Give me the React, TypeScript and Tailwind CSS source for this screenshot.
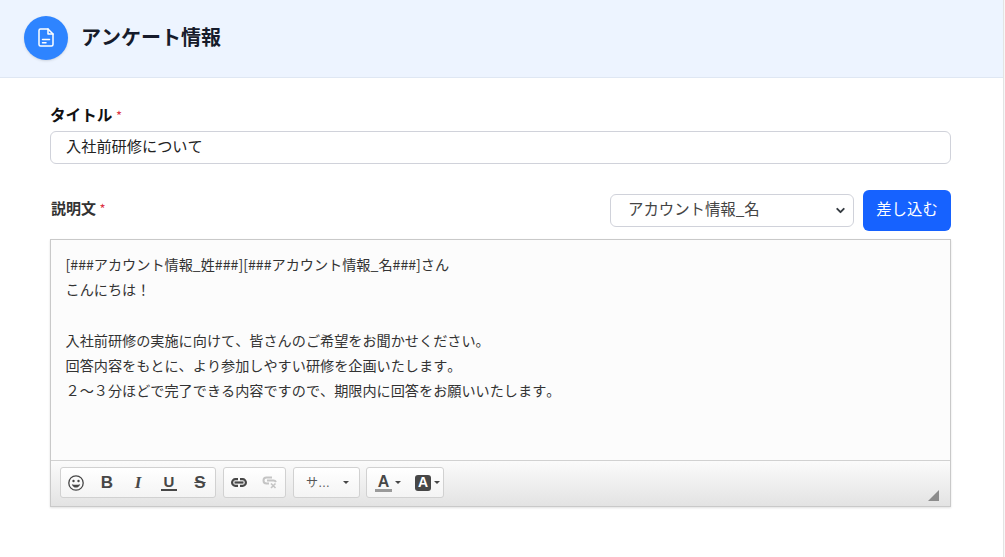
import { ChevronDown } from "lucide-react";

const font = "[font-family:'Noto_Sans_CJK_JP',sans-serif] [font-kerning:none] [text-spacing-trim:space-all]";

function Group({ children, className }: { children: React.ReactNode; className: string }) {
    return (
        <div className={`flex h-[31px] items-center rounded-[3px] border border-[#d1d1d1] bg-gradient-to-b from-white to-[#f4f4f4] ${className}`}>
            {children}
        </div>
    );
}

function Caret() {
    return <span className="h-0 w-0 border-x-[3px] border-t-[3px] border-x-transparent border-t-[#474747]" />;
}

function DocIcon() {
    return (
        <svg width="16" height="19" viewBox="0 0 16 19" fill="none" stroke="white" strokeWidth="1.5" strokeLinecap="round" strokeLinejoin="round">
            <path d="M2.5 1h7.5l5 5v10.5a1.5 1.5 0 0 1-1.5 1.5h-11A1.5 1.5 0 0 1 1 16.5v-14A1.5 1.5 0 0 1 2.5 1z" />
            <path d="M10 1v5h5" />
            <path d="M4.5 11.5h7M4.5 14.8h3.5" />
        </svg>
    );
}

function SmileIcon() {
    return (
        <svg width="16" height="16" viewBox="0 0 16 16" fill="none" stroke="#474747" strokeWidth="1.3">
            <circle cx="8" cy="8" r="7.2" />
            <circle cx="5.5" cy="6" r="1.2" fill="#474747" stroke="none" />
            <circle cx="10.5" cy="6" r="1.2" fill="#474747" stroke="none" />
            <path d="M3.8 9.2c.8 2.3 2.4 3.4 4.2 3.4s3.4-1.1 4.2-3.4c-2.8.7-5.6.7-8.4 0z" fill="#474747" stroke="none" />
        </svg>
    );
}

function LinkIcon() {
    return (
        <svg width="16" height="9" viewBox="0 0 16 9" fill="none" stroke="#474747">
            <path d="M7 1.2H4.4a3.3 3.3 0 0 0 0 6.6H7M9 1.2h2.6a3.3 3.3 0 0 1 0 6.6H9" strokeWidth="2.2" />
            <path d="M3.5 4.5h9" strokeWidth="2.2" />
        </svg>
    );
}

function UnlinkIcon() {
    return (
        <svg width="16" height="13" viewBox="0 0 16 13" fill="none" stroke="#c4c4c4">
            <path d="M10 1.5H4.5a3 3 0 0 0 0 6h2.5M5 4.5h6.5a3 3 0 0 1 2.5 1.5" strokeWidth="2" />
            <path d="M9 7.5l4.5 4.5M13.5 7.5L9 12" strokeWidth="1.6" />
        </svg>
    );
}

function App() {
    return (
        <div className={`flex h-[557px] w-full overflow-hidden bg-white ${font}`}>
            <div className="min-w-0 flex-1">
                <header className="flex h-[78px] items-center gap-[13px] border-b border-[#dfe7f3] bg-[#edf4ff] pb-0.5 pl-6">
                    <div className="flex h-11 w-11 items-center justify-center rounded-full bg-[#2e84ff] shadow-sm">
                        <DocIcon />
                    </div>
                    <h1 className="-mt-0.5 text-xl font-bold text-[#161b2b]">アンケート情報</h1>
                </header>

                <main className="pl-[50px] pr-[52px] pt-[25px]">
                    <label className="block h-[28px] text-[15.6px] leading-[22px] font-bold text-[#111]">
                        タイトル <span className="text-[13px] font-normal text-[#dc3545]">*</span>
                    </label>
                    <div className="flex h-[33px] items-center rounded-md border border-[#d0d2da] bg-white pb-1 pl-[15px] text-[15.2px] text-[#222]">
                        入社前研修について
                    </div>

                    <div className="mt-[26px] flex h-[41px] items-center justify-between">
                        <label className="pb-1 pl-px text-[15px] font-bold text-[#333]">
                            説明文 <span className="text-[13px] font-normal text-[#dc3545]">*</span>
                        </label>
                        <div className="flex items-center gap-[9px]">
                            <div className="flex h-[33px] w-[244px] items-center justify-between rounded-md border border-[#d0d2da] bg-white pb-1 pl-[17px] pr-[6px] text-[15.4px] text-[#444]">
                                アカウント情報_名
                                <ChevronDown size={13} strokeWidth={3.5} color="#343a40" className="mt-1" />
                            </div>
                            <button className="h-[41px] w-[88px] rounded-md bg-[#1662ff] pb-1 text-[15.4px] text-white">差し込む</button>
                        </div>
                    </div>

                    <div className="mt-2 h-[268px] border border-[#c9c9c9] shadow-[0_1px_2px_rgba(0,0,0,0.12)]">
                        <div className="h-[221px] border-b border-[#d1d1d1] bg-[#fcfcfc] pl-[14.5px] pr-[15px] pt-[12px] text-[14.15px] leading-[25.2px] text-[#333]">
                            <p>[###アカウント情報_姓###][###アカウント情報_名###]さん</p>
                            <p>こんにちは！</p>
                            <p>&nbsp;</p>
                            <p>入社前研修の実施に向けて、皆さんのご希望をお聞かせください。</p>
                            <p>回答内容をもとに、より参加しやすい研修を企画いたします。</p>
                            <p>２〜３分ほどで完了できる内容ですので、期限内に回答をお願いいたします。</p>
                        </div>
                        <div className="relative flex h-[45px] items-start gap-[7px] bg-gradient-to-b from-[#fbfbfb] to-[#e3e3e3] pl-[9px] pt-[6px]">
                            <Group className="w-[156px] justify-between px-[7px] [font-family:'Liberation_Sans',sans-serif]">
                                <SmileIcon />
                                <span className="w-4 text-center text-[17px] leading-none font-bold text-[#474747]">B</span>
                                <span className="w-4 text-center text-[17px] leading-none font-bold italic text-[#474747] [font-family:'Liberation_Serif',serif]">I</span>
                                <span className="w-4 border-b-2 border-[#474747] text-center text-[15px] leading-[15px] font-bold text-[#474747]">U</span>
                                <span className="w-4 text-center text-[17px] leading-none font-bold text-[#474747] line-through">S</span>
                            </Group>
                            <Group className="w-[63px] justify-between px-[7px]">
                                <LinkIcon />
                                <UnlinkIcon />
                            </Group>
                            <Group className="-mr-px w-[67px] justify-between pl-3 pr-[10px]">
                                <span className="text-xs text-[#555]">サ<span className="[font-family:'Liberation_Sans',sans-serif]">…</span></span>
                                <Caret />
                            </Group>
                            <Group className="w-[78px] gap-[3px] pl-[8px] [font-family:'Liberation_Sans',sans-serif]">
                                <span className="w-[17px] border-b-[3px] border-[#9a9a9a] text-center text-[16px] leading-[15px] font-bold text-[#474747]">A</span>
                                <Caret />
                                <span className="ml-[11px] flex h-[16px] w-[16px] items-center justify-center rounded-[3px] bg-[#474747] text-[14px] font-bold text-white">A</span>
                                <Caret />
                            </Group>
                            <svg className="absolute bottom-[5px] right-[11px]" width="11" height="11" viewBox="0 0 11 11">
                                <path d="M11 0v11H0z" fill="#8c8c8c" />
                            </svg>
                        </div>
                    </div>
                </main>
            </div>
            <div className="w-[2px] border-l border-[#e3e3e3] bg-[#f7f7f7]" />
        </div>
    );
}

export default App;
